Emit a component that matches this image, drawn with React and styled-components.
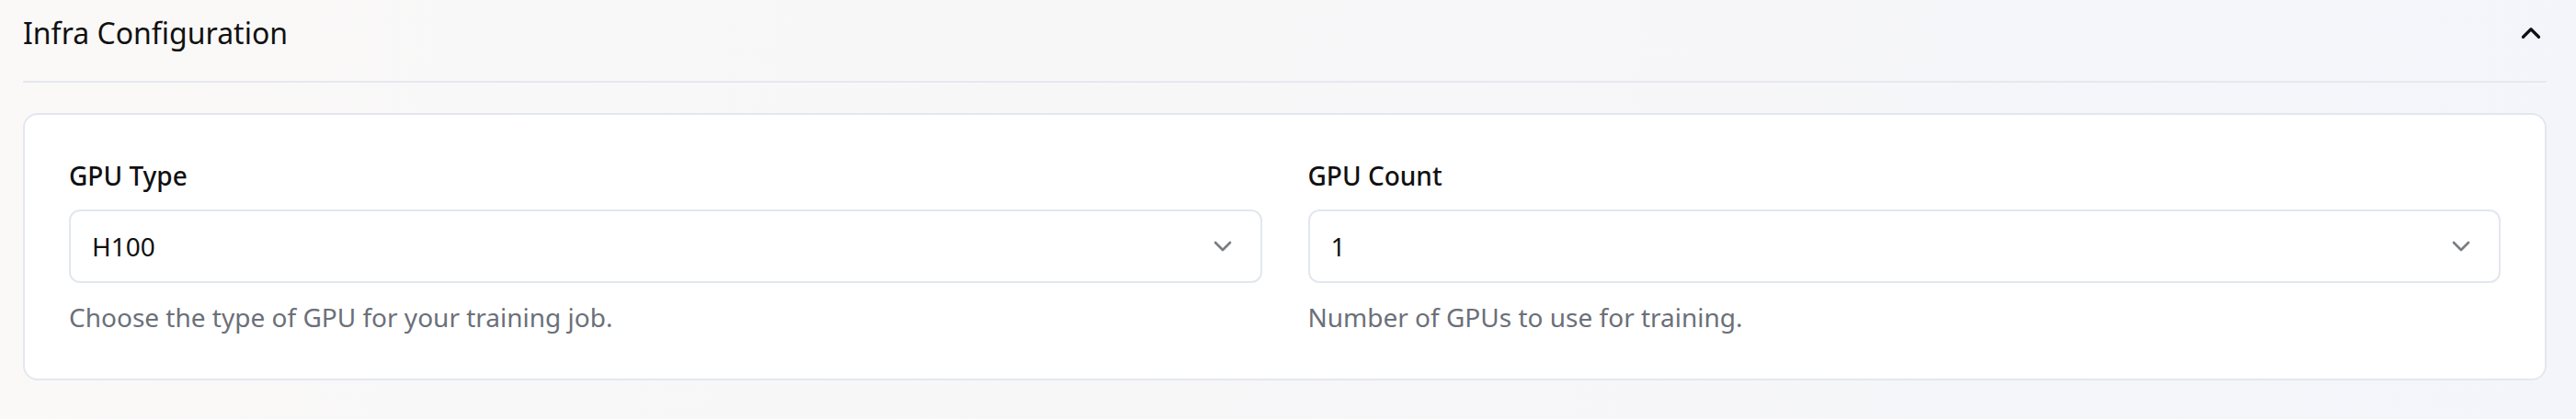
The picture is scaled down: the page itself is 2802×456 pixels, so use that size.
import React from "react";
import styled, { createGlobalStyle } from "styled-components";

const GlobalStyle = createGlobalStyle`
  html, body {
    margin: 0;
    padding: 0;
  }

  body {
    min-height: 100vh;
    background: linear-gradient(100deg, #faf9f8 0%, #f8f7f8 45%, #f3f5fa 100%);
    font-family: "Noto Sans", "Open Sans", sans-serif;
    color: #111111;
  }
`;

const Page = styled.div`
  padding: 0 32px 0 25px;
`;

const Header = styled.div`
  display: flex;
  align-items: center;
  justify-content: space-between;
  padding: 14px 0 31px;
  border-bottom: 2px solid #e5e8ee;
`;

const Title = styled.h2`
  margin: 0;
  font-size: 32px;
  font-weight: 400;
  color: #111111;
`;

const ToggleButton = styled.button`
  display: flex;
  align-items: center;
  justify-content: center;
  padding: 0;
  border: none;
  background: none;
  color: #111111;
  cursor: pointer;
`;

const Body = styled.div`
  padding-top: 33px;
`;

const Card = styled.div`
  background: #ffffff;
  border: 2px solid #e3e7ee;
  border-radius: 16px;
  padding: 47px 48px 48px;
  display: grid;
  grid-template-columns: 1fr 1fr;
  gap: 50px;
`;

const Field = styled.div`
  display: flex;
  flex-direction: column;
`;

const Label = styled.label`
  font-size: 28px;
  font-weight: 500;
  color: #111111;
  margin-bottom: 18px;
`;

const Select = styled.div`
  box-sizing: border-box;
  height: 80px;
  display: flex;
  align-items: center;
  justify-content: space-between;
  padding: 0 25px 0 23px;
  border: 2px solid #e3e7ee;
  border-radius: 12px;
  background: #ffffff;
  font-size: 28px;
  color: #111111;
  cursor: pointer;
`;

const SelectIcon = styled.span`
  display: flex;
  color: #7a7d82;
`;

const Helper = styled.p`
  margin: 18px 0 0;
  font-size: 28px;
  color: #6b7079;
`;

const Chevron = ({ up, size = 32, weight = 2 }) => (
  <svg
    width={size}
    height={size}
    viewBox="0 0 24 24"
    fill="none"
    stroke="currentColor"
    strokeWidth={weight}
    strokeLinecap="round"
    strokeLinejoin="round"
  >
    <path d={up ? "m18 15-6-6-6 6" : "m6 9 6 6 6-6"} />
  </svg>
);

const fields = [
  {
    label: "GPU Type",
    value: "H100",
    helper: "Choose the type of GPU for your training job.",
  },
  {
    label: "GPU Count",
    value: "1",
    helper: "Number of GPUs to use for training.",
  },
];

const App = () => {
  return (
    <>
      <GlobalStyle />
      <Page>
        <Header>
          <Title>Infra Configuration</Title>
          <ToggleButton aria-label="Collapse">
            <Chevron up size={34} weight={2.3} />
          </ToggleButton>
        </Header>

        <Body>
          <Card>
            {fields.map((f) => (
              <Field key={f.label}>
                <Label>{f.label}</Label>
                <Select role="button">
                  <span>{f.value}</span>
                  <SelectIcon>
                    <Chevron />
                  </SelectIcon>
                </Select>
                <Helper>{f.helper}</Helper>
              </Field>
            ))}
          </Card>
        </Body>
      </Page>
    </>
  );
};

export default App;
